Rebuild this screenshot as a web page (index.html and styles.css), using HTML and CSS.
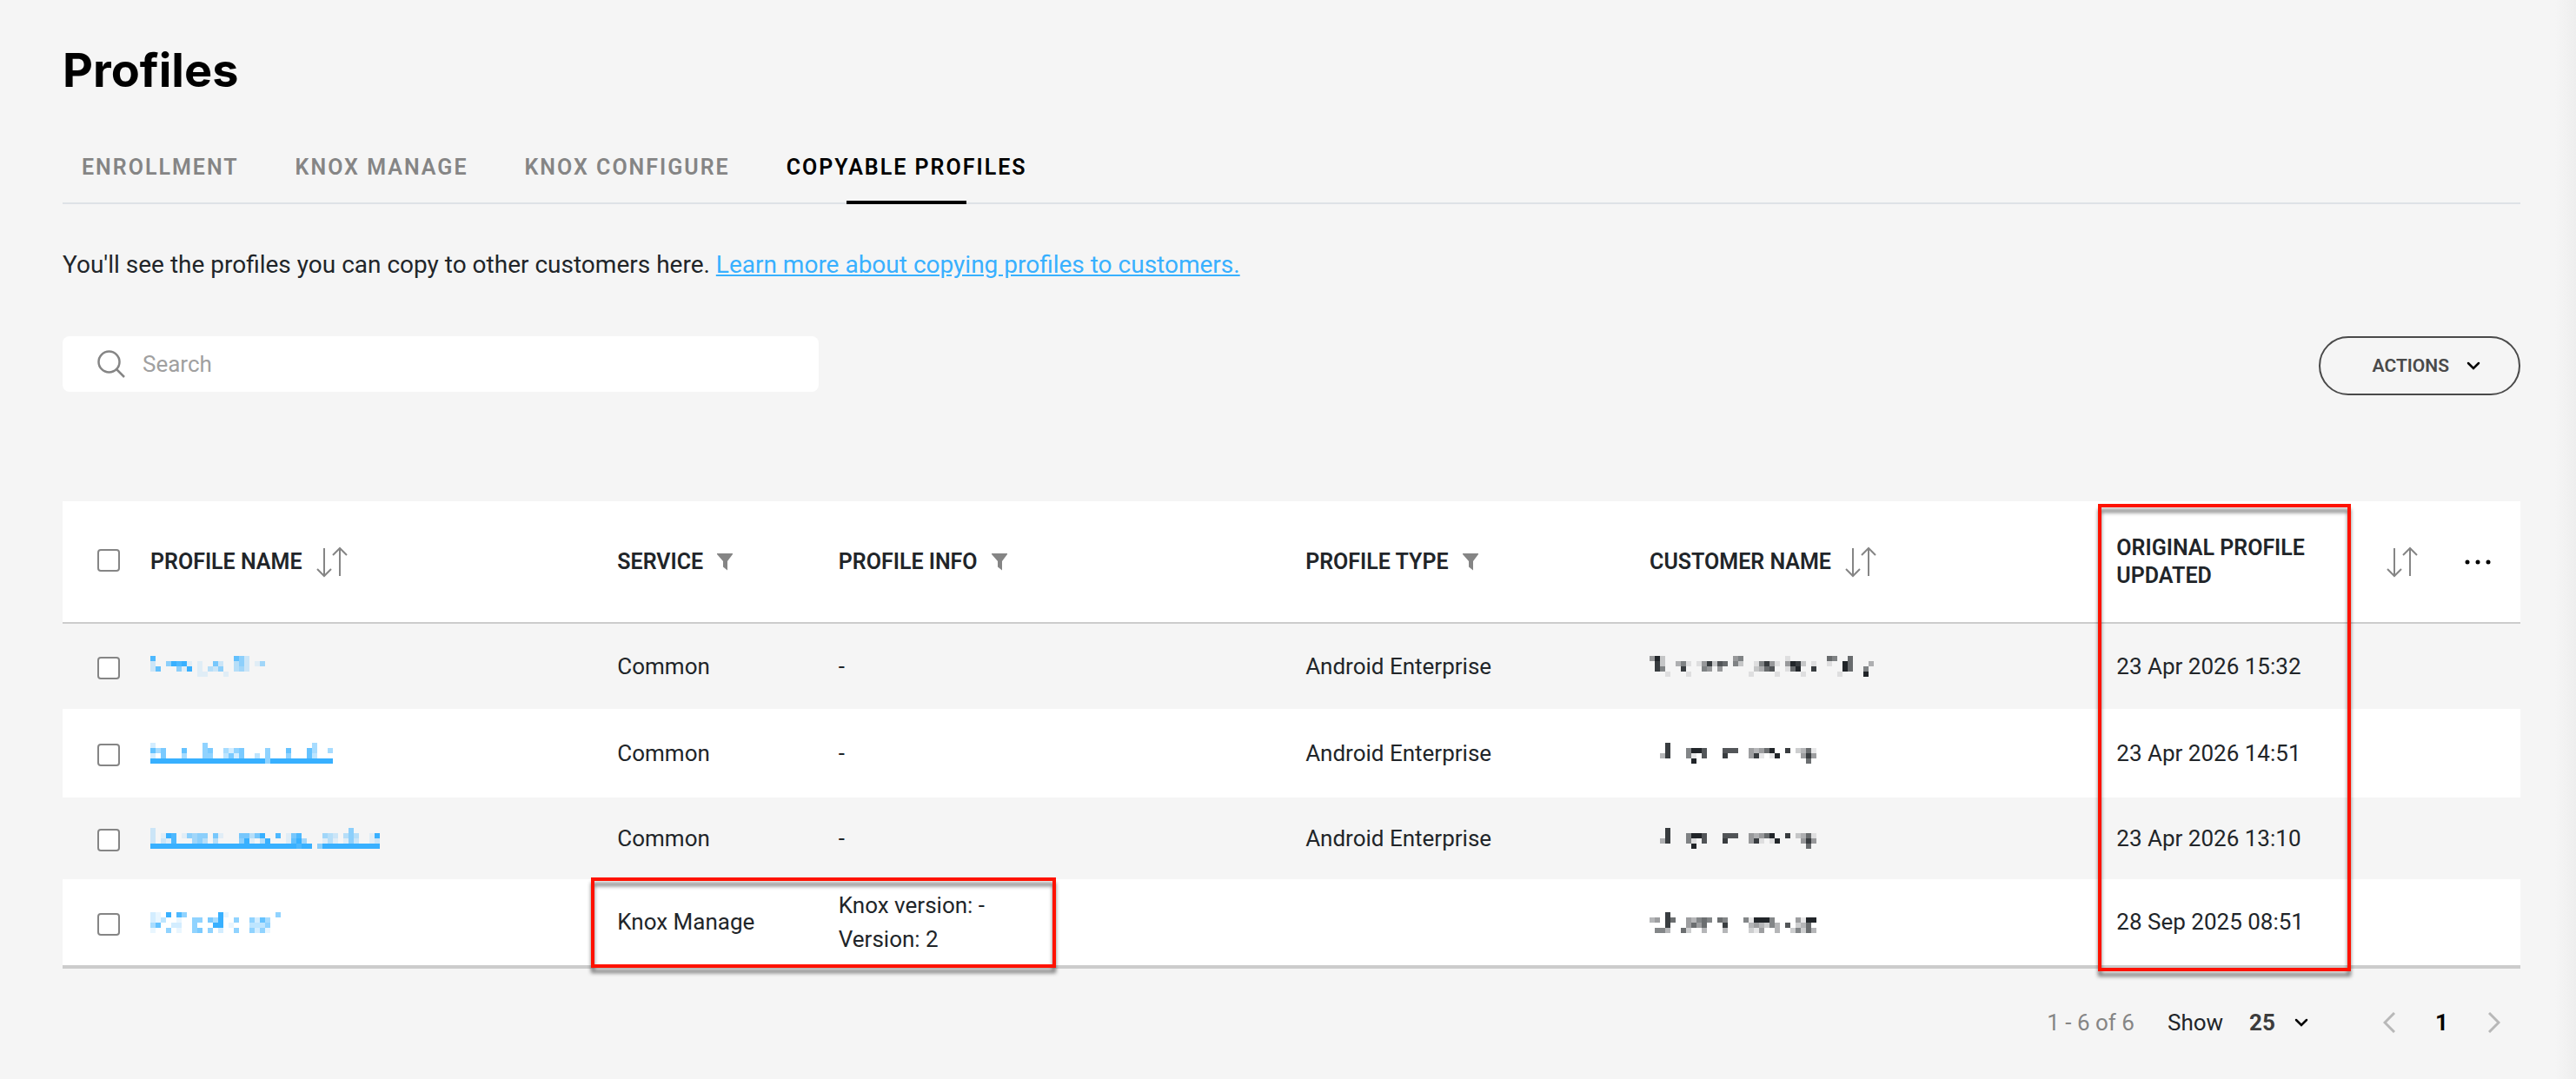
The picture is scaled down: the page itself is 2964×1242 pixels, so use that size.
FILE: index.html
```html
<!DOCTYPE html>
<html lang="en">
<head>
    <meta charset="UTF-8">
    <meta name="viewport" content="width=device-width, initial-scale=1.0">
    <title>Profiles</title>
    <link rel="stylesheet" href="styles.css">
</head>
<body>
    <!-- shared icons -->
    <svg class="icon-defs" width="0" height="0">
        <symbol id="icon-sort" viewBox="0 0 36 36">
            <path d="M9 2v32M1 26l8 8 8-8M27 34V2M19 10l8-8 8 8" fill="none" stroke="currentColor" stroke-width="2"/>
        </symbol>
        <symbol id="icon-filter" viewBox="0 0 18 20">
            <path d="M0 0h18v1l-6 8v10.500l-5-4V9L0 1z" fill="currentColor"/>
        </symbol>
        <symbol id="icon-down" viewBox="0 0 16 10">
            <path d="M2 2l6 6 6-6" fill="none" stroke="currentColor" stroke-width="2.500" stroke-linecap="round"/>
        </symbol>
    </svg>

    <main class="page">
        <h1 class="page-title">Profiles</h1>

        <nav class="tabs">
            <a class="tab" href="#">ENROLLMENT</a>
            <a class="tab" href="#">KNOX MANAGE</a>
            <a class="tab" href="#">KNOX CONFIGURE</a>
            <a class="tab active" href="#">COPYABLE PROFILES</a>
        </nav>

        <p class="intro">You'll see the profiles you can copy to other customers here. <a href="#">Learn more about copying profiles to customers.</a></p>

        <div class="toolbar">
            <label class="search">
                <svg class="search-icon" viewBox="0 0 32 32">
                    <circle cx="13.500" cy="13.500" r="12" fill="none" stroke="currentColor" stroke-width="2.500"/>
                    <path d="M22 22l9 9" stroke="currentColor" stroke-width="2.500"/>
                </svg>
                <input type="search" placeholder="Search" aria-label="Search">
            </label>
            <button class="actions-btn" type="button">
                ACTIONS
                <svg class="icon-down"><use href="#icon-down"/></svg>
            </button>
        </div>

        <div class="table-wrap">
            <table class="profiles">
                <colgroup>
                    <col class="col-check">
                    <col class="col-name">
                    <col class="col-service">
                    <col class="col-info">
                    <col class="col-type">
                    <col class="col-customer">
                    <col class="col-updated">
                    <col class="col-sort">
                    <col>
                </colgroup>
                <thead>
                    <tr>
                        <th class="check-cell"><input type="checkbox" aria-label="Select all"></th>
                        <th><span class="head">PROFILE NAME <svg class="icon-sort"><use href="#icon-sort"/></svg></span></th>
                        <th><span class="head">SERVICE <svg class="icon-filter"><use href="#icon-filter"/></svg></span></th>
                        <th><span class="head">PROFILE INFO <svg class="icon-filter"><use href="#icon-filter"/></svg></span></th>
                        <th><span class="head">PROFILE TYPE <svg class="icon-filter"><use href="#icon-filter"/></svg></span></th>
                        <th><span class="head">CUSTOMER NAME <svg class="icon-sort"><use href="#icon-sort"/></svg></span></th>
                        <th class="updated-head">ORIGINAL PROFILE UPDATED</th>
                        <th><svg class="icon-sort"><use href="#icon-sort"/></svg></th>
                        <th>
                            <button class="more-btn" type="button" aria-label="Columns">
                                <svg viewBox="0 0 30 6"><circle cx="3" cy="3" r="2.500"/><circle cx="15" cy="3" r="2.500"/><circle cx="27" cy="3" r="2.500"/></svg>
                            </button>
                        </th>
                    </tr>
                </thead>
                <tbody>
                    <tr>
                        <td class="check-cell"><input type="checkbox" aria-label="Select row"></td>
                        <td><a href="#" aria-label="Profile"><svg class="masked" data-cells="8...............752/2..59891.1..62..352.14/27...519.1.325..342/.........11...1"></svg></a></td>
                        <td>Common</td>
                        <td>-</td>
                        <td>Android Enterprise</td>
                        <td><svg class="masked" data-cells="492.............45........1.......65..6/.82..351.148276.52..15841.4982.1..1..96...3/.85...8...54.4......2367..169..8.....96..5/...1...1...........1....1....1......1....9"></svg></td>
                        <td>23 Apr 2026 15:32</td>
                        <td></td>
                        <td></td>
                    </tr>
                    <tr>
                        <td class="check-cell"><input type="checkbox" aria-label="Select row"></td>
                        <td><a href="#" aria-label="Profile"><svg class="masked" data-cells="2.........5....................4/746...7...56..4256....5...7...74..4/2.6...4...55..3626..3.5...5...73/99999999999999999999995999999999999"></svg></a></td>
                        <td>Common</td>
                        <td>-</td>
                        <td>Android Enterprise</td>
                        <td><svg class="masked" data-cells="...8/...8...5997...777..43469..8.2361/..38...51.7...8....481.19....484/........9.....................6"></svg></td>
                        <td>23 Apr 2026 14:51</td>
                        <td></td>
                        <td></td>
                    </tr>
                    <tr>
                        <td class="check-cell"><input type="checkbox" aria-label="Select row"></td>
                        <td><a href="#" aria-label="Profile"><svg class="masked" data-cells="2.....................................5/2.198.15455.61...66369..8.168....432.353..19/2.218...453.3....591.39...1794...131.152..12/9999999999999999999999999999899.599999999999"></svg></a></td>
                        <td>Common</td>
                        <td>-</td>
                        <td>Android Enterprise</td>
                        <td><svg class="masked" data-cells="...8/...8...5997...777..43469..8.2361/..38...51.7...8....481.19....484/........9.....................6"></svg></td>
                        <td>23 Apr 2026 13:10</td>
                        <td></td>
                        <td></td>
                    </tr>
                    <tr>
                        <td class="check-cell"><input type="checkbox" aria-label="Select row"></td>
                        <td><a href="#" aria-label="Profile"><svg class="masked" data-cells="21.9.85......91.........5/213..1..55.649..5..5274/47..22..5...99.1...3335/1..5.1..56.5.2..5..5251"></svg></a></td>
                        <td>Knox Manage</td>
                        <td>Knox version: -<br>Version: 2</td>
                        <td></td>
                        <td><svg class="masked" data-cells="...8/34.86..43565.65...519995....4199/...8...4646...8....343253.7.236/.553..62..3...3....214..3..25263"></svg></td>
                        <td>28 Sep 2025 08:51</td>
                        <td></td>
                        <td></td>
                    </tr>
                </tbody>
            </table>
            <!-- highlight frames over the table -->
            <div class="highlight highlight-service"></div>
            <div class="highlight highlight-updated"></div>
        </div>

        <div class="pagination">
            <span class="range">1 - 6 of 6</span>
            <label class="page-size">
                <span>Show</span>
                <select>
                    <option>25</option>
                </select>
                <svg class="icon-down"><use href="#icon-down"/></svg>
            </label>
            <div class="pager">
                <button type="button" aria-label="Previous page"><svg viewBox="0 0 14 24"><path d="M13 1L2 12l11 11"/></svg></button>
                <span class="current">1</span>
                <button type="button" aria-label="Next page"><svg viewBox="0 0 14 24"><path d="M1 1l11 11L1 23"/></svg></button>
            </div>
        </div>
    </main>

    <script src="script.js"></script>
</body>
</html>
```

FILE: styles.css
```css
* {
    box-sizing: border-box;
}
body {
    margin: 0;
    font-family: Roboto, "Open Sans", sans-serif;
    font-size: 26px;
    color: #212529;
    background: linear-gradient(to left, #eeeeee, #f5f5f5 24px);
    min-height: 100vh;
}
.icon-defs {
    position: absolute;
}
.page {
    padding: 51px 64px 40px 72px;
}
.page-title {
    margin: 0;
    font-family: Inter, sans-serif;
    font-size: 54px;
    font-weight: 700;
    line-height: 60px;
    color: #000;
}

/* tabs */
.tabs {
    display: flex;
    gap: 65px;
    margin-top: 67px;
    padding-left: 22px;
    border-bottom: 2px solid #dee2e6;
}
.tab {
    position: relative;
    padding-bottom: 25px;
    font-size: 25px;
    font-weight: 600;
    line-height: 30px;
    letter-spacing: 2px;
    color: #858585;
    text-decoration: none;
}
.tab.active {
    color: #000;
}
.tab.active::after {
    content: "";
    position: absolute;
    left: 25%;
    bottom: -2px;
    width: 50%;
    height: 4px;
    background: #000;
}
.intro {
    margin: 50px 0 0;
    font-size: 28px;
    line-height: 40px;
}
.intro a {
    color: #38b0ff;
}

/* toolbar */
.toolbar {
    display: flex;
    justify-content: space-between;
    align-items: flex-start;
    margin-top: 62px;
}
.search {
    display: flex;
    align-items: center;
    gap: 20px;
    width: 31%;
    max-width: 870px;
    height: 64px;
    padding: 0 40px;
    background: #fff;
    border-radius: 8px;
}
.search-icon {
    width: 32px;
    height: 32px;
    color: #858585;
}
.search input {
    flex: 1;
    padding: 0;
    border: none;
    outline: none;
    background: none;
    font: inherit;
    color: #212529;
}
.search input::placeholder {
    color: #a0a0a0;
}
.actions-btn {
    display: flex;
    align-items: center;
    gap: 20px;
    height: 68px;
    padding: 0 44px 0 60px;
    border: 2px solid #4a4a4a;
    border-radius: 34px;
    background: none;
    font: inherit;
    font-size: 21px;
    font-weight: 600;
    color: #4a4a4a;
    cursor: pointer;
}
.icon-down {
    width: 16px;
    height: 10px;
    color: #000;
}

/* table */
.table-wrap {
    position: relative;
    margin-top: 122px;
}
.profiles {
    width: 100%;
    table-layout: fixed;
    border-collapse: separate;
    border-spacing: 0;
    border-bottom: 4px solid #ccc;
}
.col-check {
    width: 101px;
}
.col-name,
.col-info,
.col-customer {
    width: 19%;
}
.col-service {
    width: 9%;
}
.col-type {
    width: 14%;
}
.col-updated {
    width: 11%;
}
.col-sort {
    width: 90px;
}
.profiles th,
.profiles td {
    padding: 0;
    text-align: left;
    vertical-align: middle;
}
.profiles th {
    height: 141px;
    background: #fff;
    border-bottom: 2px solid #ccc;
    font-size: 25px;
    font-weight: 600;
    line-height: 32px;
}
.profiles td {
    height: 98px;
    line-height: 39px;
}
.profiles tr:nth-child(2) td {
    height: 102px;
}
.profiles tr:nth-child(3) td {
    height: 94px;
}
.profiles tr:last-child td {
    height: 99px;
}
.profiles tbody tr:nth-child(even) td {
    background: #fff;
}
.profiles th.check-cell {
    padding: 0 0 4px 40px;
}
.profiles td.check-cell {
    padding: 4px 0 0 40px;
}
.check-cell input {
    display: block;
    appearance: none;
    width: 26px;
    height: 26px;
    margin: 0;
    border: 2px solid #858585;
    border-radius: 4px;
    background: #fff;
}
.head {
    display: flex;
    align-items: center;
    gap: 16px;
}
.profiles .updated-head {
    height: auto;
    padding-right: 80px;
}
.icon-sort {
    display: block;
    width: 36px;
    height: 36px;
    color: #858585;
}
.icon-filter {
    width: 18px;
    height: 20px;
    color: #858585;
}
.more-btn {
    display: block;
    padding: 0;
    border: none;
    background: none;
    cursor: pointer;
}
.more-btn svg {
    display: block;
    width: 30px;
    height: 6px;
}
.masked {
    display: block;
    fill: currentColor;
    shape-rendering: crispEdges;
}
.profiles a {
    color: #38b0ff;
}

.highlight {
    position: absolute;
    border: 4px solid #ff1200;
    filter: drop-shadow(0 6px 2px rgba(0, 0, 0, 0.5));
    pointer-events: none;
}
.highlight-service {
    left: 21.5%;
    bottom: 1px;
    width: 18.9%;
    height: 104px;
}
.highlight-updated {
    top: 3px;
    bottom: -3px;
    left: 82.8%;
    width: 10.3%;
}

/* pagination */
.pagination {
    display: flex;
    justify-content: flex-end;
    align-items: center;
    margin-top: 42px;
    padding-right: 23px;
    line-height: 40px;
}
.range {
    margin-right: 38px;
    color: #858585;
}
.page-size {
    display: flex;
    align-items: center;
    margin-right: 86px;
}
.page-size select {
    appearance: none;
    margin: 0 22px 0 30px;
    padding: 0;
    border: none;
    background: none;
    font: inherit;
    font-weight: 700;
    color: #3c3c3c;
}
.pager {
    display: flex;
    align-items: center;
    gap: 46px;
}
.pager button {
    padding: 0;
    border: none;
    background: none;
}
.pager svg {
    display: block;
    width: 14px;
    height: 24px;
    fill: none;
    stroke: #b8b8b8;
    stroke-width: 3;
}
.current {
    font-weight: 700;
    color: #000;
}
```

FILE: script.js
```js
// draws the masked names: rows split by "/", each digit is the strength of one cell
const CELL = 6;

document.querySelectorAll('.masked').forEach((svg) => {
    const rows = svg.dataset.cells.split('/');
    const cols = Math.max(...rows.map((row) => row.length));
    svg.setAttribute('width', cols * CELL);
    svg.setAttribute('height', rows.length * CELL);

    rows.forEach((row, y) => {
        [...row].forEach((level, x) => {
            if (level === '.') return;
            const rect = document.createElementNS('http://www.w3.org/2000/svg', 'rect');
            rect.setAttribute('x', x * CELL);
            rect.setAttribute('y', y * CELL);
            rect.setAttribute('width', CELL);
            rect.setAttribute('height', CELL);
            rect.setAttribute('fill-opacity', level / 9);
            svg.appendChild(rect);
        });
    });
});
```
